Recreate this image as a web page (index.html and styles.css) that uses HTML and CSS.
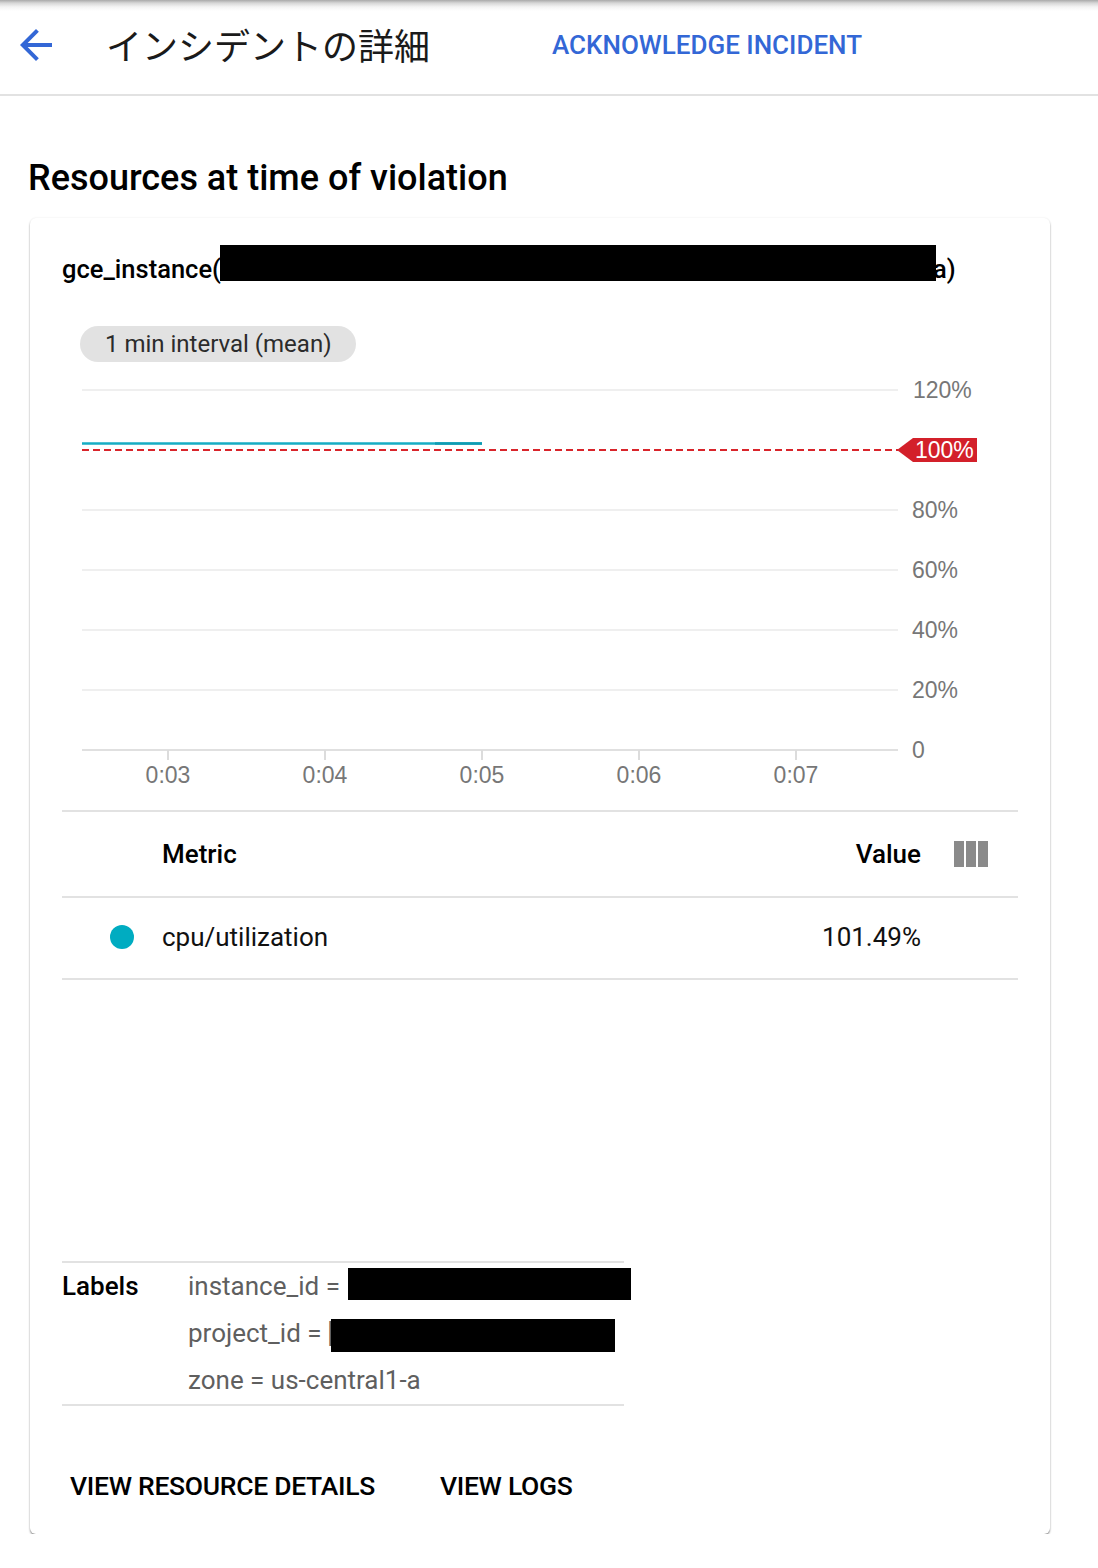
FILE: index.html
```html
<!DOCTYPE html>
<html lang="ja">
<head>
<meta charset="utf-8">
<title>インシデントの詳細</title>
<link rel="stylesheet" href="styles.css">
</head>
<body>
<header class="topbar">
  <button class="back" aria-label="Back">
    <svg width="48" height="48" viewBox="0 0 24 24"><path fill="#3367d6" d="M20 11H7.83l5.59-5.59L12 4l-8 8 8 8 1.41-1.41L7.83 13H20v-2z"/></svg>
  </button>
  <h1 class="title">インシデントの詳細</h1>
  <a class="ack">ACKNOWLEDGE INCIDENT</a>
</header>

<main class="content">
  <h2 class="section-title">Resources at time of violation</h2>

  <section class="card">
    <div class="resource-name"><span class="rn-text">gce_instance(</span><span class="redact redact-name"></span><span class="rn-text">a)</span></div>

    <div class="chip">1 min interval (mean)</div>

    <svg class="chart" width="956" height="440" viewBox="0 0 956 440">
      <g stroke="#efefef" stroke-width="2">
        <line x1="20" y1="20" x2="836" y2="20"/>
        <line x1="20" y1="140" x2="836" y2="140"/>
        <line x1="20" y1="200" x2="836" y2="200"/>
        <line x1="20" y1="260" x2="836" y2="260"/>
        <line x1="20" y1="320" x2="836" y2="320"/>
      </g>
      <line x1="20" y1="380" x2="836" y2="380" stroke="#e0e0e0" stroke-width="2"/>
      <g stroke="#dcdcdc" stroke-width="2">
        <line x1="106" y1="380" x2="106" y2="390"/>
        <line x1="263" y1="380" x2="263" y2="390"/>
        <line x1="420" y1="380" x2="420" y2="390"/>
        <line x1="577" y1="380" x2="577" y2="390"/>
        <line x1="734" y1="380" x2="734" y2="390"/>
      </g>
      <line x1="20" y1="73.5" x2="420" y2="73.5" stroke="#16adc3" stroke-width="2.5"/>
      <line x1="373" y1="73.5" x2="420" y2="73.5" stroke="#0f9bb2" stroke-width="2.5"/>
      <line x1="20" y1="80" x2="836" y2="80" stroke="#d9242b" stroke-width="2" stroke-dasharray="7 4"/>
      <polygon points="835,80 851,68 915,68 915,92 851,92" fill="#d3202a"/>
      <text class="tag-text" x="853" y="88">100%</text>
      <g class="ylab">
        <text x="851" y="28">120%</text>
        <text x="850" y="148">80%</text>
        <text x="850" y="208">60%</text>
        <text x="850" y="268">40%</text>
        <text x="850" y="328">20%</text>
        <text x="850" y="388">0</text>
      </g>
      <g class="xlab">
        <text x="106" y="413">0:03</text>
        <text x="263" y="413">0:04</text>
        <text x="420" y="413">0:05</text>
        <text x="577" y="413">0:06</text>
        <text x="734" y="413">0:07</text>
      </g>
    </svg>

    <div class="metrics">
      <div class="mrow mhead">
        <span class="mcell-dot"></span>
        <span class="mcell-name">Metric</span>
        <span class="mcell-value">Value</span>
        <span class="mcell-icon">
          <svg width="34" height="26" viewBox="0 0 34 26"><rect x="0" y="0" width="10" height="26" fill="#8a8a8a"/><rect x="12" y="0" width="10" height="26" fill="#8a8a8a"/><rect x="24" y="0" width="10" height="26" fill="#8a8a8a"/></svg>
        </span>
      </div>
      <div class="mrow mdata">
        <span class="mcell-dot"><span class="dot"></span></span>
        <span class="mcell-name regular">cpu/utilization</span>
        <span class="mcell-value regular">101.49%</span>
        <span class="mcell-icon"></span>
      </div>
    </div>

    <div class="labels">
      <div class="labels-key">Labels</div>
      <div class="labels-values">
        <div class="lv">instance_id = <span class="redact redact-inst"></span></div>
        <div class="lv">project_id = <span class="bracket">[</span><span class="redact redact-proj"></span></div>
        <div class="lv">zone = us-central1-a</div>
      </div>
    </div>

    <div class="actions">
      <button class="btn">VIEW RESOURCE DETAILS</button>
      <button class="btn btn-logs">VIEW LOGS</button>
    </div>
  </section>
</main>
</body>
</html>
```

FILE: styles.css
```css
* { box-sizing: border-box; }

html, body {
  margin: 0;
  padding: 0;
  background: #ffffff;
  font-family: Roboto, "Noto Sans", "Liberation Sans", sans-serif;
  color: #000;
}

.topbar {
  height: 96px;
  display: flex;
  align-items: center;
  border-bottom: 2px solid #e2e2e2;
  background: linear-gradient(#a9a9a9 0px, #d6d6d6 3px, #f4f4f4 7px, #ffffff 11px);
}

.back {
  margin-left: 12px;
  width: 48px;
  height: 48px;
  padding: 0;
  border: 0;
  background: none;
  display: flex;
  margin-top: -4px;
}

.title {
  margin: -6px 0 0 46px;
  font-family: "Noto Sans CJK JP", "Noto Sans", sans-serif;
  font-weight: 400;
  font-size: 36px;
  line-height: 48px;
  color: #1a1a1a;
}

.ack {
  margin-left: 122px;
  margin-top: -4px;
  font-family: Roboto, "Liberation Sans", sans-serif;
  font-weight: 500;
  font-size: 26px;
  color: #3367d6;
}

.content {
  padding: 0 48px 0 28px;
}

.section-title {
  margin: 62px 0 20px 0;
  font-size: 36px;
  line-height: 40px;
  font-weight: 500;
  color: #000;
}

.card {
  margin-left: 2px;
  width: 1020px;
  height: 1316px;
  border-radius: 6px;
  box-shadow: 0 0 2px rgba(0,0,0,0.10), 0 2px 2px rgba(0,0,0,0.38);
  padding: 27px 32px 0 32px;
  display: flex;
  flex-direction: column;
}

.resource-name {
  font-size: 25.5px;
  font-weight: 500;
  height: 36px;
  white-space: nowrap;
  display: flex;
  align-items: flex-start;
}

.rn-text {
  line-height: 36px;
  margin-top: 6px;
}

.redact {
  display: inline-block;
  background: #000;
  flex-shrink: 0;
}

.redact-name {
  width: 716px;
  height: 36px;
  margin-left: -1px;
  margin-right: -3px;
}

.chip {
  align-self: flex-start;
  margin: 45px 0 0 18px;
  height: 36px;
  line-height: 36px;
  padding: 0 24px 0 25px;
  border-radius: 18px;
  background: #e2e2e2;
  font-size: 24px;
  color: #2b2b2b;
}

.chart {
  display: block;
  margin-top: 8px;
}

.chart text {
  font-family: "Liberation Sans", Arial, sans-serif;
  font-size: 23px;
  fill: #777777;
}

.chart .xlab text { text-anchor: middle; }

.chart .tag-text {
  fill: #ffffff;
  font-size: 23px;
}

.metrics {
  border-top: 2px solid #e2e2e2;
}

.mrow {
  display: grid;
  grid-template-columns: 100px 1fr 200px 97px;
  align-items: center;
  border-bottom: 2px solid #e2e2e2;
  font-size: 26px;
}

.mhead { height: 86px; font-weight: 500; }
.mdata { height: 82px; padding-bottom: 3px; }

.mcell-dot {
  display: flex;
  align-items: center;
  padding-left: 48px;
}

.dot {
  width: 24px;
  height: 24px;
  border-radius: 50%;
  background: #00acc1;
}

.mcell-value { text-align: right; }

.mcell-icon {
  display: flex;
  padding-left: 33px;
}

.regular { font-weight: 400; color: #111; }

.labels {
  margin-top: 281px;
  width: 562px;
  border-top: 2px solid #e2e2e2;
  border-bottom: 2px solid #e2e2e2;
  display: flex;
  font-size: 26px;
  line-height: 47px;
}

.labels-key {
  width: 126px;
  flex-shrink: 0;
  font-weight: 500;
  color: #000;
}

.labels-values { color: #5f5f5f; }

.lv {
  height: 47px;
  display: flex;
  align-items: center;
  white-space: nowrap;
}

.redact-inst {
  width: 283px;
  height: 32px;
  margin-left: 8px;
  margin-top: -5px;
}

.bracket { margin-left: 6px; color: #5f5f5f; }

.redact-proj {
  width: 284px;
  height: 33px;
  margin-left: -3px;
  margin-top: 4px;
}

.actions {
  margin-top: 55px;
  display: flex;
  height: 48px;
  align-items: center;
}

.btn {
  border: 0;
  background: none;
  padding: 0 8px;
  height: 48px;
  font-family: Roboto, "Liberation Sans", sans-serif;
  font-weight: 500;
  font-size: 26.5px;
  color: #000;
  letter-spacing: -0.3px;
}

.btn-logs { margin-left: 49px; }
```
